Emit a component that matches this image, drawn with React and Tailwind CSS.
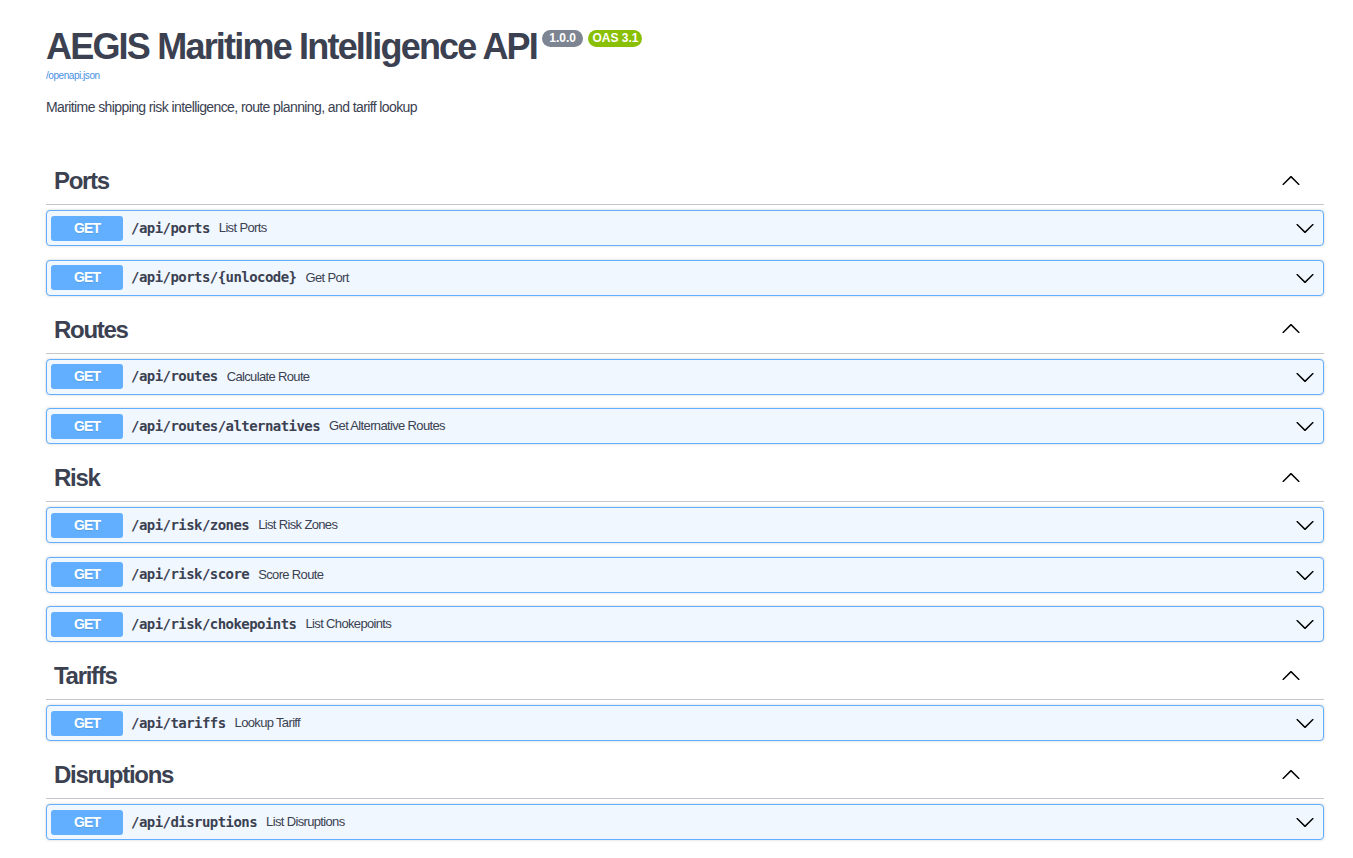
import React from "react";

const SANS = { fontFamily: '"Liberation Sans", Arial, sans-serif' };

const sections = [
  { name: "Ports", ops: [["/api/ports", "List Ports"], ["/api/ports/{unlocode}", "Get Port"]] },
  { name: "Routes", ops: [["/api/routes", "Calculate Route"], ["/api/routes/alternatives", "Get Alternative Routes"]] },
  {
    name: "Risk",
    ops: [
      ["/api/risk/zones", "List Risk Zones"],
      ["/api/risk/score", "Score Route"],
      ["/api/risk/chokepoints", "List Chokepoints"],
    ],
  },
  { name: "Tariffs", ops: [["/api/tariffs", "Lookup Tariff"]] },
  { name: "Disruptions", ops: [["/api/disruptions", "List Disruptions"]] },
];

const ARROW =
  "M17.418 6.109c.272-.268.709-.268.979 0s.271.701 0 .969l-7.908 7.83c-.27.268-.707.268-.979 0l-7.908-7.83c-.27-.268-.27-.701 0-.969.271-.268.709-.268.979 0L10 13.25l7.418-7.141z";

function ArrowDown() {
  return (
    <svg width="20" height="20" viewBox="0 0 20 20" className="shrink-0" aria-hidden="true">
      <path fill="#000" d={ARROW} />
    </svg>
  );
}

function ArrowUp() {
  return (
    <svg width="20" height="20" viewBox="0 0 20 20" className="shrink-0 rotate-180" aria-hidden="true">
      <path fill="#000" d={ARROW} />
    </svg>
  );
}

function Op({ path, summary }) {
  return (
    <div className="mb-[13.5px] flex h-[36px] items-center rounded-[4px] border border-[#61affe] bg-[#f0f7ff] pl-[4px] pr-[8px] shadow-[0_0_3px_rgba(0,0,0,0.19)]">
      <div
        className="flex h-[25px] w-[72px] shrink-0 items-center justify-center rounded-[3px] bg-[#61affe] text-[14px] font-bold tracking-[-0.9px] text-white [text-shadow:0_1px_0_rgba(0,0,0,0.1)]"
        style={SANS}
      >
        GET
      </div>
      <span
        className="ml-[8px] pr-[9px] text-[14px] font-bold tracking-[-0.55px] text-[#3b4151]"
        style={{ fontFamily: '"DejaVu Sans Mono", "Liberation Mono", monospace' }}
      >
        {path}
      </span>
      <span className="flex-1 text-[13px] tracking-[-0.65px] text-[#3b4151]" style={SANS}>
        {summary}
      </span>
      <ArrowDown />
    </div>
  );
}

function Section({ name, ops }) {
  return (
    <div className="flex flex-col">
      <div className="mb-[5px] h-[44.5px] border-b border-[#c4c6cb] pl-[8px] pr-[23px] pt-[6px]">
        <div className="flex h-[28px] items-center justify-between">
          <span className="pt-[1px] text-[24px] font-bold leading-[28px] tracking-[-1.3px] text-[#3b4151]" style={SANS}>
            {name}
          </span>
          <ArrowUp />
        </div>
      </div>
      {ops.map(([p, s]) => (
        <Op key={p} path={p} summary={s} />
      ))}
    </div>
  );
}

export default function App() {
  return (
    <div className="min-h-screen w-full bg-white pl-[46px] pr-[29px] pt-[26px]" style={SANS}>
      <div className="flex items-start">
        <h1 className="text-[36px] font-bold leading-[41px] tracking-[-1.8px] text-[#3b4151]" style={SANS}>
          AEGIS Maritime Intelligence API
        </h1>
        <span className="ml-[5px] mt-[4px] whitespace-pre rounded-full bg-[#7d8492] px-[4px] py-[2px] text-[12px] font-bold leading-[13px] text-white">
          {" 1.0.0 "}
        </span>
        <span className="ml-[5px] mt-[4px] rounded-full bg-[#89bf04] px-[4px] py-[2px] text-[12px] font-bold leading-[13px] text-white">
          OAS 3.1
        </span>
      </div>
      <div className="mt-[2px] text-[10px] leading-[14px] tracking-[-0.45px]">
        <a href="#" className="text-[#4990e2]">
          /openapi.json
        </a>
      </div>
      <p className="mt-[14px] text-[14px] leading-[20px] tracking-[-0.6px] text-[#3b4151]">
        Maritime shipping risk intelligence, route planning, and tariff lookup
      </p>
      <div className="mt-[43.5px] flex flex-col">
        {sections.map((s) => (
          <Section key={s.name} name={s.name} ops={s.ops} />
        ))}
      </div>
    </div>
  );
}
